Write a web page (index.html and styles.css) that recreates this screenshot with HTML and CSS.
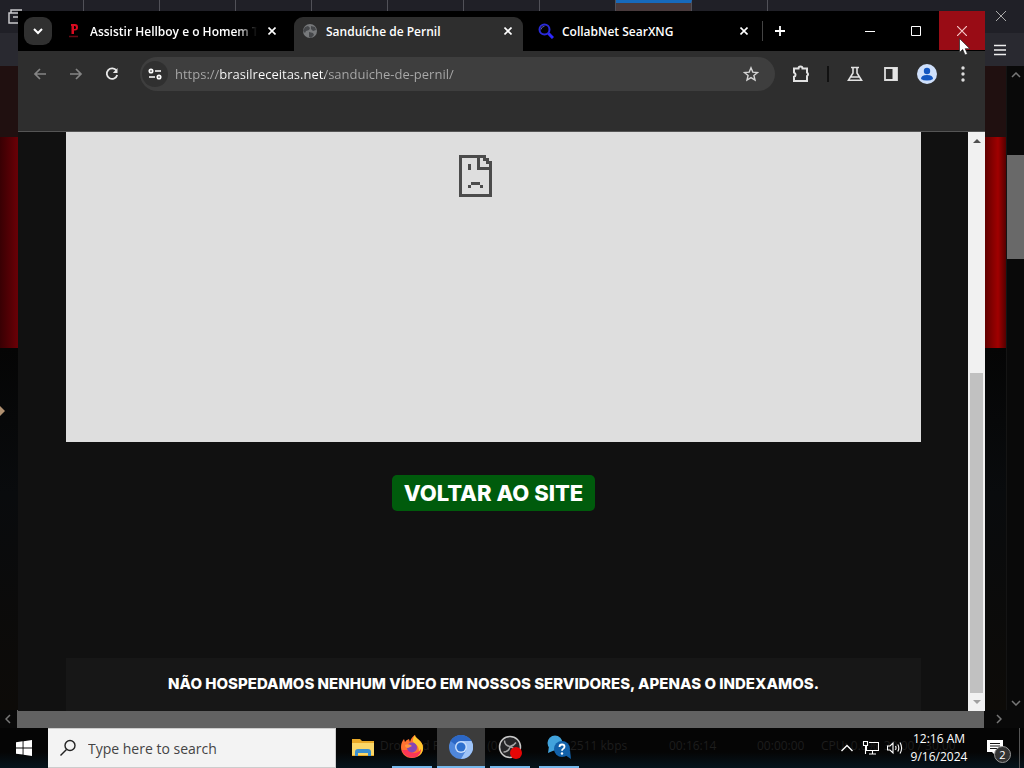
FILE: index.html
```html
<!DOCTYPE html>
<html lang="pt-BR">
<head>
<meta charset="utf-8">
<title>Sanduíche de Pernil</title>
<link rel="stylesheet" href="styles.css">
</head>
<body>
<div class="desktop">
  <div class="screen">
    <div class="back-window">
      <div class="back-tabs">
        <span class="back-tab"></span><span class="back-tab"></span><span class="back-tab"></span><span class="back-tab"></span><span class="back-tab"></span><span class="back-tab"></span><span class="back-tab"></span><span class="back-tab"></span><span class="back-tab back-tab-active"></span><span class="back-tab"></span>
        <svg class="back-view" viewBox="0 0 18 18" width="18" height="18" fill="none" stroke="#c8c8cc" stroke-width="1.5"><path d="M5 5V2h11M3 5h12v10H3zM7 9h6"/></svg>
        <button class="back-close" aria-label="Fechar janela anterior"><svg viewBox="0 0 12 12" width="12" height="12" stroke="#aaa" stroke-width="1"><path d="M1 1l10 10M11 1L1 11"/></svg></button>
      </div>
      <div class="back-bar">
        <button class="back-menu" aria-label="Menu"><svg viewBox="0 0 12 12" width="12" height="12" stroke="#eee" stroke-width="1.3"><path d="M0 1.5h12M0 6h12M0 10.5h12"/></svg></button>
      </div>
      <div class="back-body">
        <div class="back-page">
          <div class="back-head"></div>
          <div class="back-banner"></div>
          <div class="back-rest"><svg viewBox="0 0 6 12" width="6" height="12"><path d="M0 1l5 5-5 5z" fill="#b09070"/></svg></div>
        </div>
        <div class="back-scroll">
          <svg viewBox="0 0 10 6" width="10" height="6" fill="none" stroke="#777" stroke-width="1.5"><path d="M1 5l4-4 4 4"/></svg>
          <span class="back-thumb"></span>
          <svg viewBox="0 0 10 6" width="10" height="6" fill="none" stroke="#777" stroke-width="1.5"><path d="M1 1l4 4 4-4"/></svg>
        </div>
      </div>
      <div class="back-hscroll">
        <svg viewBox="0 0 6 10" width="6" height="10" fill="none" stroke="#777" stroke-width="1.5"><path d="M5 1L1 5l4 4"/></svg>
        <span class="back-hthumb"></span>
        <svg viewBox="0 0 6 10" width="6" height="10" fill="none" stroke="#777" stroke-width="1.5"><path d="M1 1l4 4-4 4"/></svg>
      </div>
    </div>

    <main class="window">
      <header class="tabstrip">
        <button class="tab-search" aria-label="Pesquisar guias"><svg viewBox="0 0 10 10" width="10" height="10" fill="none" stroke="#fff" stroke-width="2"><path d="M1 3l4 4 4-4"/></svg></button>
        <div class="tabs">
          <div class="tab">
            <svg class="favicon" viewBox="0 0 16 16" width="16" height="16"><path d="M5 1h4q3 0 3 3.200T9 7.500H8V11H5.500V3H5zm3 2v3h.8q1.200 0 1.200-1.500T8.800 3z" fill="#d80b20" fill-rule="evenodd"/><path d="M3 13.500h9" stroke="#680914" stroke-width="1.500"/></svg>
            <button class="tab-title fade">Assistir Hellboy e o Homem Torto</button>
            <button class="tab-close" aria-label="Fechar guia"><svg viewBox="0 0 8 8" width="8" height="8" stroke="#fff" stroke-width="1.6"><path d="M0.500 0.500l7 7M7.500 0.500l-7 7"/></svg></button>
          </div>
          <div class="tab tab-active">
            <svg class="favicon" viewBox="0 0 16 16" width="16" height="16"><circle cx="8" cy="8" r="7" fill="#77797b"/><path d="M3 4l3-1 2 2-1 2-3 1-1 2-2-2zM9 3l4 1 1 3-3 1-2-2zM7 9l4 1 1 2-3 3-2-1z" fill="#45474a"/></svg>
            <button class="tab-title">Sanduíche de Pernil</button>
            <button class="tab-close" aria-label="Fechar guia"><svg viewBox="0 0 8 8" width="8" height="8" stroke="#fff" stroke-width="1.6"><path d="M0.500 0.500l7 7M7.500 0.500l-7 7"/></svg></button>
          </div>
          <div class="tab">
            <svg class="favicon" viewBox="0 0 16 16" width="16" height="16" fill="none"><circle cx="6.500" cy="6.500" r="5" stroke="#2a2ad8" stroke-width="2"/><path d="M3 6.500Q3.500 3.500 6.500 3.200" stroke="#5c5ca0"/><path d="M10.500 10.500l4.500 4.500" stroke="#2d28ff" stroke-width="3"/></svg>
            <button class="tab-title">CollabNet SearXNG</button>
            <button class="tab-close" aria-label="Fechar guia"><svg viewBox="0 0 8 8" width="8" height="8" stroke="#fff" stroke-width="1.6"><path d="M0.500 0.500l7 7M7.500 0.500l-7 7"/></svg></button>
          </div>
        </div>
        <button class="new-tab" aria-label="Nova guia"><svg viewBox="0 0 10 10" width="10" height="10" stroke="#fff" stroke-width="1.8"><path d="M5 0v10M0 5h10"/></svg></button>
        <div class="win-controls">
          <button class="win-button" aria-label="Minimizar"><svg viewBox="0 0 10 10" width="10" height="10" stroke="#fff"><path d="M0 5.500h10"/></svg></button>
          <button class="win-button" aria-label="Maximizar"><svg viewBox="0 0 10 10" width="10" height="10" stroke="#fff" fill="none"><path d="M.5.5h9v9h-9z"/></svg></button>
          <button class="win-button win-close" aria-label="Fechar"><svg viewBox="0 0 10 10" width="10" height="10" stroke="#f5c8c8" stroke-width="1.2"><path d="M0 0l10 10M10 0L0 10"/></svg></button>
        </div>
      </header>

      <nav class="toolbar">
        <div class="nav-buttons">
          <button class="tool" aria-label="Voltar"><svg viewBox="0 0 14 12" width="14" height="12" fill="none" stroke="#858585" stroke-width="1.7"><path d="M13 6H2M7 1L2 6l5 5"/></svg></button>
          <button class="tool" aria-label="Avançar"><svg viewBox="0 0 14 12" width="14" height="12" fill="none" stroke="#858585" stroke-width="1.7"><path d="M1 6h11M7 1l5 5-5 5"/></svg></button>
          <button class="tool" aria-label="Recarregar"><svg viewBox="0 0 14 14" width="14" height="14" fill="none" stroke="#e8e8e8" stroke-width="1.8"><path d="M11.500 3.700A5.300 5.300 0 1 0 12.200 8"/><path d="M12.500 1v5H7.800z" fill="#e8e8e8" stroke="none"/></svg></button>
        </div>
        <div class="omnibox">
          <button class="site-info" aria-label="Informações do site"><svg viewBox="0 0 14 12" width="14" height="12" fill="none" stroke="#fff" stroke-width="1.7"><circle cx="3" cy="3" r="1.700"/><path d="M7 3h6M1 9h6"/><circle cx="11" cy="9" r="1.700"/></svg></button>
          <input class="address" type="text" aria-label="Endereço" value="https://brasilreceitas.net/sanduiche-de-pernil/">
          <button class="star" aria-label="Favoritar"><svg viewBox="0 0 16 16" width="16" height="16" fill="none" stroke="#d5d5d5" stroke-width="1.4"><path d="M8 1.800l1.800 4.300 4.700.4-3.600 3 1.100 4.600L8 11.600l-4 2.500 1.100-4.600-3.600-3 4.700-.4z"/></svg></button>
        </div>
        <button class="tool" aria-label="Extensões"><svg viewBox="0 0 18 18" width="18" height="18" fill="none" stroke="#e2e2e2" stroke-width="2"><path d="M2 3.500h4.500a2 2 0 0 1 4 0H15v4a2 2 0 0 1 0 3.500v5H2v-4.200a2.200 2.200 0 0 0 0-4.200z"/></svg></button>
        <span class="divider"></span>
        <div class="tool-group">
          <button class="tool" aria-label="Experimentos"><svg viewBox="0 0 16 16" width="16" height="16" fill="none" stroke="#e2e2e2" stroke-width="1.600"><path d="M4 1.500h8M6 2v5l-4.500 7.200h13L10 7V2M4 11h8"/></svg></button>
          <button class="tool" aria-label="Painel lateral"><svg viewBox="0 0 14 14" width="14" height="14"><path d="M1 1h12v12H1z" fill="none" stroke="#ddd" stroke-width="1.800"/><path d="M8.500 1H13v12H8.500z" fill="#e6e6e6"/></svg></button>
          <button class="tool" aria-label="Perfil"><svg viewBox="0 0 20 20" width="20" height="20"><circle cx="10" cy="10" r="10" fill="#cfe0fb"/><circle cx="10" cy="7" r="3.200" fill="#1457c0"/><path d="M4 15q0-4 6-4t6 4q-2 1.500-6 1.500T4 15z" fill="#1457c0"/></svg></button>
          <button class="tool" aria-label="Menu"><svg viewBox="0 0 4 16" width="4" height="16" fill="#ddd"><circle cx="2" cy="2" r="1.700"/><circle cx="2" cy="8" r="1.700"/><circle cx="2" cy="14" r="1.700"/></svg></button>
        </div>
      </nav>

      <div class="viewport">
        <section class="page">
          <div class="player">
            <svg viewBox="0 0 33 42" width="33" height="42" shape-rendering="crispEdges" fill="#4b4b4b"><path d="M0 0h27v3h3v3h3v36H0zM3 3v36h27V15H18V3zM21 3v9h9V9h-3V6h-3V3z" fill-rule="evenodd"/><path d="M9 9h3v6H9zM12 27h9v3h-9zM9 30h3v3H9zM21 30h3v3h-3z"/></svg>
          </div>
          <a class="return" href="#">VOLTAR AO SITE</a>
          <footer class="notice">NÃO HOSPEDAMOS NENHUM VÍDEO EM NOSSOS SERVIDORES, APENAS O INDEXAMOS.</footer>
        </section>
        <div class="scrollbar">
          <svg viewBox="0 0 8 4" width="8" height="4"><path d="M0 4l4-4 4 4z" fill="#505050"/></svg>
          <span class="thumb"></span>
          <svg viewBox="0 0 8 4" width="8" height="4"><path d="M0 0l4 4 4-4z" fill="#a0a0a0"/></svg>
        </div>
      </div>
    </main>
  </div>

  <footer class="taskbar">
    <div class="ghost" aria-hidden="true"><span class="ghost-frames">Dropped Frames 0 (0.0%)</span><span class="ghost-rate">2511 kbps</span><span class="ghost-time">00:16:14</span><span class="ghost-rec">00:00:00</span><span>CPU: 0.8%&nbsp; 30.00 / 30.00</span></div>
    <button class="start" aria-label="Start"><svg viewBox="0 0 16 16" width="16" height="16" fill="#fff"><path d="M0 2.200L6.600 1.300v6.200H0zM7.500 1.200L16 0v7.500H7.500zM0 8.400h6.600v6.200L0 13.700zM7.500 8.400H16V16l-8.500-1.200z"/></svg></button>
    <label class="search">
      <svg viewBox="0 0 18 18" width="18" height="18" fill="none" stroke="#222" stroke-width="1.400"><circle cx="11" cy="6.500" r="5"/><path d="M7.500 10.500L1.500 16.500"/></svg>
      <input class="search-input" type="text" placeholder="Type here to search" aria-label="Search">
    </label>
    <div class="apps">
      <button class="app app-idle" aria-label="File Explorer"><svg viewBox="0 0 24 24" width="24" height="24"><path d="M1 4h8l2 2h12v15H1z" fill="#e9a928"/><path d="M1 8h22v12H1z" fill="#fbd768"/><path d="M4 21v-4q0-3 3-3h10q3 0 3 3v4h-3v-3H7v3z" fill="#3b8fd0"/></svg></button>
      <button class="app" aria-label="Firefox"><svg viewBox="0 0 24 24" width="24" height="24"><path d="M12 23C5 23 1 18 1 12c0-3 1-6 3-8l1 3q1-2 4-3l1 3c1-4 3-6 5-7 0 4 8 5 8 13 0 6-5 10-11 10z" fill="#ff7130"/><path d="M15 0c0 4 8 5 8 13 0 4-2 7-5 8 2-6 1-10-4-13-2-2-1-5 1-8z" fill="#ffc82d"/><path d="M2 15c2 6 8 9 14 7 4-2 5-5 5-8-3 5-9 5-12 1z" fill="#fb3657"/><circle cx="12" cy="12.500" r="5" fill="#8546b5"/><path d="M5 10q4-2 7 1l-4 2q-3 0-3-3z" fill="#ff9640"/></svg></button>
      <button class="app app-current" aria-label="Chromium"><svg viewBox="0 0 24 24" width="24" height="24"><circle cx="12" cy="12" r="12" fill="#4f87dc"/><path d="M12 6h10.500A12 12 0 0 1 12 24l5.200-9z" fill="#9fc4f8"/><path d="M1.600 6A12 12 0 0 1 22.400 6H12a6 6 0 0 0-5.500 4z" fill="#2c67c5"/><circle cx="12" cy="12" r="6" fill="#c9defc"/><circle cx="12" cy="12" r="4.500" fill="#2d70cf"/></svg></button>
      <button class="app" aria-label="OBS Studio"><svg viewBox="0 0 24 24" width="24" height="24"><circle cx="12" cy="12" r="10.500" fill="#252527" stroke="#c8c8c8" stroke-width="1.500"/><path d="M6.500 5.500q0 5 5.500 6 4-1 6-4M12 12q-1.500 5-6.500 5M12 12q4 0 5 5" fill="none" stroke="#a5a5a5" stroke-width="1.500"/><circle cx="18" cy="18" r="6" fill="#e60606"/></svg></button>
      <button class="app" aria-label="Help"><svg viewBox="0 0 24 24" width="24" height="24"><circle cx="8" cy="8" r="7.500" fill="#42a3dc"/><path d="M2 11l-1 7 7-3z" fill="#42a3dc"/><circle cx="15" cy="14" r="8" fill="#1261a9"/><path d="M18 20l6 4-1-9z" fill="#1261a9"/><path d="M12.500 12q0-2.500 2.500-2.500t2.500 2.200q0 1.300-1.300 2-1.200.6-1.200 2" fill="none" stroke="#fff" stroke-width="1.800"/><circle cx="15" cy="18.500" r="1.200" fill="#fff"/></svg></button>
    </div>
    <div class="tray">
      <button class="tray-button" aria-label="Show hidden icons"><svg viewBox="0 0 12 8" width="12" height="8" fill="none" stroke="#fff" stroke-width="1.400"><path d="M0.500 7L6 1.500 11.500 7"/></svg></button>
      <button class="tray-button" aria-label="Network"><svg viewBox="0 0 16 14" width="16" height="14" fill="none" stroke="#fff" stroke-width="1.100"><path d="M6 1.500h9.500v8H3.500V5M9.500 9.500v3M6 13h7M.5.5h4v4h-4zM2.500 4.500V13"/></svg></button>
      <button class="tray-button" aria-label="Volume"><svg viewBox="0 0 16 14" width="16" height="14" fill="none" stroke="#fff" stroke-width="1.100"><path d="M.5 5h2.500l3-3v10L3 9H.5zM8.500 5q1 2 0 4M10.800 3.500q2 3.500 0 7M13 1.500q3.200 5.500 0 11"/></svg></button>
      <div class="clock"><time>12:16 AM</time><time>9/16/2024</time></div>
      <button class="notifications" aria-label="Notifications"><svg viewBox="0 0 16 16" width="16" height="16"><path d="M0 0h16v12H9v4l-4-4H0z" fill="#fff"/><path d="M3 3.500h10M3 6h10M3 8.500h7" stroke="#111"/></svg><span class="badge">2</span></button>
    </div>
  </footer>
  <svg class="cursor" viewBox="0 0 12 18" width="12" height="18"><path d="M.5.5v14l3.200-3 2.300 5.500 2.500-1-2.300-5.300h4.600z" fill="#fff" stroke="#222" stroke-width=".7"/></svg>
</div>
</body>
</html>
```
FILE: styles.css
```css
* { box-sizing: border-box; }
body {
  margin: 0;
  background: #000;
  color: #fff;
  font-family: "Open Sans", "Noto Sans", sans-serif;
  font-size: 12px;
}
button, input { font: inherit; color: inherit; border: 0; padding: 0; margin: 0; background: none; }
button { display: flex; align-items: center; justify-content: center; flex: none; }
svg { display: block; flex: none; }

.desktop { position: relative; display: flex; flex-direction: column; min-height: 100vh; overflow: hidden; }
.screen { position: relative; flex: 1; display: flex; }

/* Window behind */
.back-window { flex: 1; display: flex; flex-direction: column; min-width: 0; }
.back-tabs { position: relative; display: flex; height: 33px; padding-left: 8px; background: #202027; }
.back-tab { flex: 0 1 76px; border-right: 1px solid #515158; }
.back-tab-active { background: #493a3c; border-top: 3px solid #1769bb; }
.back-view { position: absolute; left: 6px; top: 8px; }
.back-close { position: absolute; right: 17px; top: 10px; }
.back-bar { display: flex; justify-content: flex-end; height: 33px; padding: 0 18px; background: #292930; }
.back-body { flex: 1; display: flex; background: #050505; }
.back-page { flex: 1; display: flex; flex-direction: column; border-right: 1px solid #141414; }
.back-head { height: 71px; background: #201010; }
.back-banner { height: 211px; background: linear-gradient(90deg, #380003, #680006 17px, #680006 50%, #600 calc(100% - 20px), #a00000 calc(100% - 8px), #500 100%); }
.back-rest { flex: 1; padding-top: 57px; background: linear-gradient(#050505, #090b0d 40%, #0d0b08); }
.back-scroll { display: flex; flex-direction: column; align-items: center; width: 17px; padding: 6px 0 4px; background: #090909; }
.back-thumb { width: 17px; height: 104px; margin: 77px 0 auto; background: #696969; }
.back-hscroll { display: flex; align-items: center; height: 18px; padding: 0 22px 0 5px; gap: 6px; background: #090909; }
.back-hthumb { flex: 1; align-self: stretch; margin-right: 6px; background: #626262; }

/* Browser window */
.window { position: absolute; inset: 11px 39px 17px 18px; display: flex; flex-direction: column; background: #111; }
.tabstrip { display: flex; height: 40px; padding-left: 6px; background: #000; }
.tab-search { width: 28px; height: 28px; margin: 6px 6px 0 0; border-radius: 9px; background: #303030; }
.tabs { display: flex; flex: 0 1 704px; gap: 7px; padding-top: 6px; min-width: 0; }
.tab { display: flex; align-items: center; flex: 0 1 229px; min-width: 0; height: 34px; padding: 0 8px; gap: 8px; }
.tab .favicon { margin-bottom: 6px; }
.tab-active { background: #2e2e2e; border-radius: 9px 9px 0 0; }
.tab-title { display: block; flex: 1; min-width: 0; overflow: hidden; white-space: nowrap; text-align: left; line-height: 16px; font-weight: 600; margin-bottom: 5px; }
.fade { mask-image: linear-gradient(90deg, #000 calc(100% - 20px), transparent); }
.tab-close { width: 14px; height: 16px; margin-bottom: 6px; }
.new-tab { width: 34px; height: 20px; margin-top: 10px; border-left: 1px solid #444; }
.win-controls { display: flex; margin-left: auto; }
.win-button { width: 46px; height: 39px; }
.win-close { background: #990c15; }

.toolbar { display: flex; align-items: flex-start; gap: 12px; height: 81px; padding: 6px 8px 0; background: #2e2e2e; border-bottom: 1px solid #555; }
.nav-buttons, .tool-group { display: flex; gap: 8px; }
.tool { width: 28px; height: 34px; }
.omnibox { display: flex; align-items: center; flex: 1; min-width: 0; height: 34px; margin-left: 2px; padding: 0 10px 0 2px; border-radius: 17px; background: #3e3e3e; }
.site-info { width: 26px; height: 26px; border-radius: 13px; background: #303030; }
.address {
  flex: 1; min-width: 0; margin-left: 7px; height: 24px;
  font-size: 13px;
  background: linear-gradient(90deg, #aaa 45px, #fff 45px, #fff 150px, #aaa 150px);
  background-clip: text;
  -webkit-background-clip: text;
  -webkit-text-fill-color: transparent;
}
.star { width: 28px; height: 28px; }
.divider { width: 2px; height: 16px; margin-top: 9px; background: #111; }

.viewport { flex: 1; display: flex; }
.page { flex: 1; display: flex; flex-direction: column; align-items: center; padding: 0 47px 0 48px; font-family: Inter, sans-serif; font-weight: 800; }
.player { display: flex; justify-content: center; width: 100%; height: 310px; padding: 23px 37px 0 0; background: #dedede; }
.return { margin-top: 33px; padding: 0 12px; line-height: 36px; border-radius: 5px; background: #005b0c; color: #fff; font-size: 22px; text-decoration: none; }
.notice { width: 100%; margin-top: auto; padding: 16px 0 17px; background: #171717; font-size: 15px; line-height: 20px; text-align: center; white-space: nowrap; display: flex; justify-content: center; }
.scrollbar { display: flex; flex-direction: column; align-items: center; width: 17px; padding: 7px 0; background: #f1f1f1; }
.thumb { width: 13px; height: 320px; margin: auto 0 7px; background: #c1c1c1; }

/* Taskbar */
.taskbar { position: relative; display: flex; height: 40px; background: linear-gradient(#050505 60%, #06141c); }
.ghost { position: absolute; inset: 0 40px 6px 380px; display: flex; align-items: center; color: #1d1d1d; white-space: nowrap; }
.ghost-frames { width: 190px; }
.ghost-rate { width: 99px; }
.ghost-time { width: 88px; }
.ghost-rec { width: 64px; }
.start { width: 48px; }
.search { display: flex; align-items: center; width: 288px; padding: 0 10px 0 11px; gap: 11px; background: #f3f3f3; border: 1px solid #ccc; border-left: 0; }
.search-input { flex: 1; min-width: 0; font-size: 14px; color: #333; }
.search-input::placeholder { color: #444; opacity: 1; }
.apps { display: flex; gap: 9px; padding-left: 7px; z-index: 1; }
.app { width: 40px; border-bottom: 2px solid #76b9ed; }
.app-idle { border-bottom-color: transparent; }
.app-current { width: 48px; margin: 0 -4px; background: #3c3c3c; }
.tray { display: flex; align-items: center; margin-left: auto; padding-right: 4px; z-index: 1; }
.tray::after { content: ""; width: 1px; height: 40px; background: #555; }
.tray-button { width: 24px; height: 40px; }
.clock { display: flex; flex-direction: column; align-items: center; width: 64px; line-height: 18px; white-space: nowrap; }
.notifications { position: relative; width: 48px; height: 40px; }
.badge { position: absolute; left: 23px; top: 18px; width: 17px; height: 17px; border: 1px solid #999; border-radius: 9px; background: #333; font-size: 11px; line-height: 15px; text-align: center; }
.cursor { position: absolute; left: 959px; top: 38px; z-index: 2; }
```
